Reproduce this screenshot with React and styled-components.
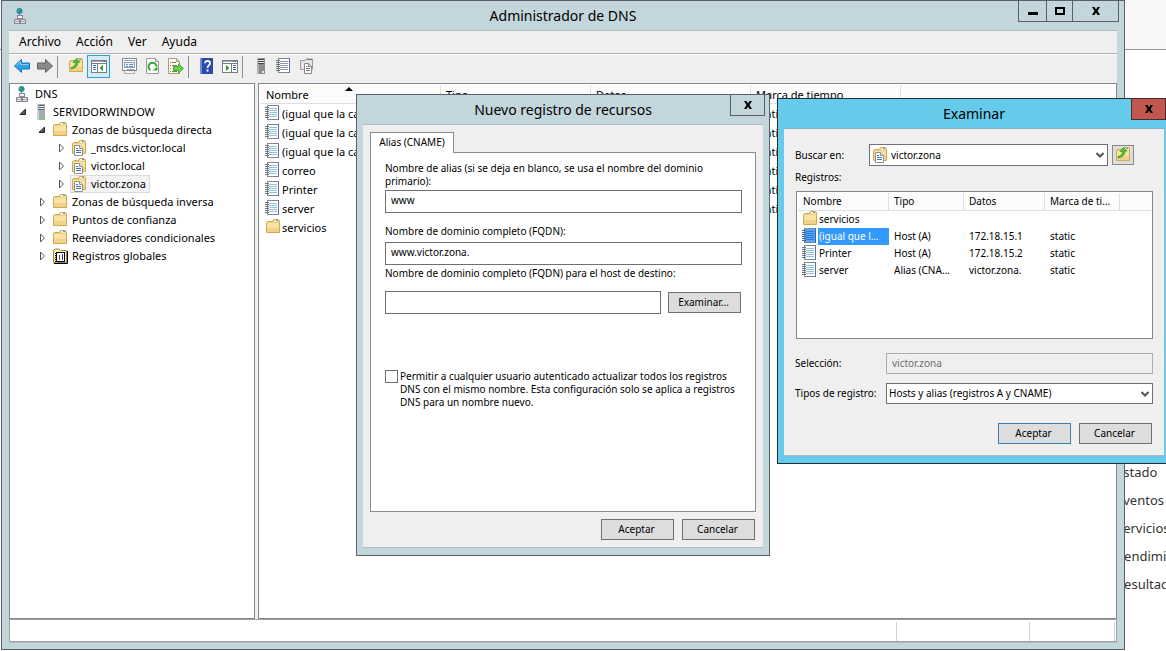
import React from "react";
import styled, { createGlobalStyle, css } from "styled-components";

const GlobalStyle = createGlobalStyle`
  * { box-sizing: border-box; }
  body {
    margin: 0;
    background: #fff;
    color: #000;
    font: 11px/18px "Noto Sans", "Open Sans", sans-serif;
  }
  button, input, select { font: inherit; color: inherit; border-radius: 0; margin: 0; }
  svg { display: block; flex: none; }
`;

/* ---------- icons ---------- */

const FolderShape = () => (
  <>
    <path d="M1.500 3.500V13.500H14.500V1.500L13.500 0.500H8.500L7.500 2.500H2.500Z" fill="#edcf82" stroke="#d3a94f" />
    <path d="M8.500 2.500 9.500 1H13L14 2.500Z" fill="#fff" />
    <rect x="11" y="1" width="2" height="1" fill="#3f97dc" />
    <rect x="2" y="4" width="12" height="9" fill="#f8e2a6" />
    <rect x="2" y="9" width="12" height="4" fill="#f0d288" />
  </>
);

const FolderIcon = () => (
  <svg width="16" height="16" viewBox="0 0 16 16" aria-hidden="true">
    <FolderShape />
  </svg>
);

const ZoneIcon = () => (
  <svg width="16" height="16" viewBox="0 0 16 16" aria-hidden="true">
    <FolderShape />
    <path d="M3.500 5.500H8.500L11.500 8.500V15.500H3.500Z" fill="#fff" stroke="#8b9099" />
    <path d="M8.500 5.500V8.500H11.500" fill="#e4e8ee" stroke="#8b9099" />
    <path d="M5 8.500H7M5 10.500H10M5 12.500H10" stroke="#4b74b8" />
  </svg>
);

const FolderUpIcon = () => (
  <svg width="16" height="16" viewBox="0 0 16 16" aria-hidden="true">
    <FolderShape />
    <path d="M3 9.500C6 9 7.500 7 7.500 4.500L5 4.500L8.500 0.500L12 4L10 4.200C10 7.500 7.500 10.500 3 11Z" fill="#4cc22c" stroke="#2e8f18" strokeWidth="0.600" />
  </svg>
);

const NotebookIcon = ({ selected, gray }) => (
  <svg width="16" height="16" viewBox="0 0 16 16" aria-hidden="true">
    <rect x="2.500" y="0.500" width="11" height="14" fill={selected ? "#5aa6f5" : "#fff"} stroke="#7f8791" />
    <path d="M13.500 0.500V15" stroke={selected ? "#2d5fc0" : "#5a6dae"} />
    <path d="M4 3.500H12M4 5.500H12M4 7.500H12M4 9.500H12M4 11.500H12" stroke={selected ? "#2a7be0" : gray ? "#8c98a8" : "#8fbfd9"} />
    <path d="M0 2.500H4M0 4.500H4M0 6.500H4M0 8.500H4M0 10.500H4M0 12.500H4" stroke={selected ? "#3563a8" : "#6f757c"} />
  </svg>
);

const ServerIcon = ({ dark }) => (
  <svg width="16" height="16" viewBox="0 0 16 16" aria-hidden="true">
    <rect x="4" y="0" width="8" height="16" fill={dark ? "#8c8c8c" : "#a3adb4"} />
    <rect x="4" y="0" width="2" height="16" fill={dark ? "#b0b0b0" : "#cbd3d8"} />
    <path d="M5 1.500H11M5 3.500H11M5 5.500H11" stroke={dark ? "#444" : "#5c666e"} />
    <path d="M5 2.500H11M5 4.500H11" stroke="#e6eaec" />
    <rect x="9" y="13" width="2" height="2" fill={dark ? "#e8e8e8" : "#5be02c"} />
  </svg>
);

const DnsIcon = () => (
  <svg width="16" height="16" viewBox="0 0 16 16" aria-hidden="true">
    <circle cx="6.500" cy="3" r="3" fill="#2b7fc4" />
    <path d="M4 2.500 6 0.500 7.500 1.500 6.500 3.500 5 4ZM7.500 4 9.500 3 8.500 5.500Z" fill="#35b540" />
    <path d="M6.500 6V7" stroke="#777" />
    <rect x="4.500" y="7.500" width="5" height="3" fill="#f2f3f7" stroke="#898994" />
    <path d="M7.500 10V12" stroke="#898994" />
    <rect x="1.500" y="11.500" width="5" height="4" fill="#e4e5ec" stroke="#898994" />
    <rect x="7.500" y="11.500" width="5" height="4" fill="#e4e5ec" stroke="#898994" />
    <path d="M2 13.500H6M8 13.500H12" stroke="#a9a9b3" />
  </svg>
);

const LogsIcon = () => (
  <svg width="16" height="16" viewBox="0 0 16 16" aria-hidden="true">
    <path d="M1.500 14.500V2.500L3 1H7L8.500 2.500H14.500V14.500Z" fill="#fff79a" stroke="#8d8a5c" />
    <path d="M2 15.500H15.500V3" fill="none" stroke="#000" />
    <rect x="4.500" y="4.500" width="8" height="9" fill="#fff" stroke="#000" />
    <path d="M4 5V14" stroke="#000" strokeWidth="2" strokeDasharray="1 1" />
    <path d="M10.500 6V12" stroke="#2532c8" />
    <path d="M7.500 7V9" stroke="#2532c8" />
    <path d="M7.500 9V12" stroke="#d81e1e" />
  </svg>
);

const ArrowIcon = ({ forward }) => (
  <svg width="16" height="16" viewBox="0 0 16 16" aria-hidden="true">
    {forward ? (
      <path d="M15.500 8 8.500 1.500V5H0.500V11H8.500V14.500Z" fill="#8a8a8a" stroke="#5e5e5e" />
    ) : (
      <>
        <path d="M0.500 8 7.500 1.500V5H15.500V11H7.500V14.500Z" fill="#2ba0e6" stroke="#1c76b8" />
        <path d="M2.500 7.500 6.500 3.700V6.500H14.500" fill="none" stroke="#8fd4f8" />
      </>
    )}
  </svg>
);

const PaneIcon = ({ right }) => (
  <svg width="16" height="16" viewBox="0 0 16 16" aria-hidden="true">
    <rect x="0.500" y="2.500" width="15" height="12" fill="#fff" stroke="#767d86" />
    <path d="M1 3.500H15" stroke="#aab0b8" />
    <path d="M11 3.500H15" stroke="#4b5562" strokeDasharray="1 1" />
    <path d="M1 5.500H15" stroke="#767d86" />
    {right ? (
      <>
        <path d="M9.500 6V14" stroke="#767d86" />
        <path d="M11 7.500H14M11 9.500H14M11 11.500H14" stroke="#3b6fb5" />
        <path d="M4 7 7.500 10 4 13Z" fill="#2f9d2b" />
      </>
    ) : (
      <>
        <path d="M6.500 6V14" stroke="#767d86" />
        <path d="M2 7.500H5M2 9.500H5M2 11.500H5" stroke="#3b6fb5" />
        <path d="M12 7 8.500 10 12 13Z" fill="#2f9d2b" />
      </>
    )}
  </svg>
);

const PropertiesIcon = () => (
  <svg width="16" height="16" viewBox="0 0 16 16" aria-hidden="true">
    <rect x="0.500" y="0.500" width="14" height="12" fill="#fff" stroke="#858c95" />
    <path d="M2 2.500H13" stroke="#9aa1aa" />
    <rect x="2.500" y="4.500" width="10" height="5" fill="#eef4fa" stroke="#8da0b5" />
    <path d="M4 6.500H6M4 8.500H6M7 6.500H11M7 8.500H11" stroke="#5e8fc4" />
    <path d="M5 11.500H12" stroke="#9aa1aa" />
    <path d="M2.500 13V15.500H12.500V13" fill="#f5f5f5" stroke="#a8aeb5" />
  </svg>
);

const RefreshIcon = () => (
  <svg width="14" height="16" viewBox="0 0 14 16" aria-hidden="true">
    <path d="M0.500 0.500H9.500L12.500 3.500V15.500H0.500Z" fill="#fff" stroke="#9b9b9b" />
    <path d="M9.500 0.500V3.500H12.500" fill="#ddd" stroke="#9b9b9b" />
    <path d="M4.500 12.200A4 4 0 1 1 10.500 8.500" fill="none" stroke="#35a832" strokeWidth="2" />
    <path d="M6.500 12.500H11.500V8.500Z" fill="#35a832" />
  </svg>
);

const ExportIcon = () => (
  <svg width="16" height="16" viewBox="0 0 16 16" aria-hidden="true">
    <path d="M0.500 0.500H8.500L11.500 3.500V15.500H0.500Z" fill="#fffbe8" stroke="#a39c86" />
    <path d="M8.500 0.500V3.500H11.500" fill="#e6dcc0" stroke="#a39c86" />
    <path d="M2 4.500H3M4 4.500H8M2 7.500H3M4 7.500H9M2 10.500H3M2 13.500H3M4 13.500H9" stroke="#7d7a70" />
    <path d="M5.500 8.500H10.500V6L15.500 10.500 10.500 15V12.500H5.500Z" fill="#6dd04a" stroke="#45a82a" />
  </svg>
);

const HelpIcon = () => (
  <svg width="14" height="16" viewBox="0 0 14 16" aria-hidden="true">
    <rect x="0" y="0" width="13" height="16" fill="#2c4ba8" />
    <rect x="0" y="0" width="2" height="16" fill="#6f8bd8" />
    <path d="M5 5.200C5 2 10 2 10 5.200C10 7.500 7.500 7.400 7.500 10" fill="none" stroke="#fff" strokeWidth="1.700" />
    <rect x="6.500" y="11.500" width="2" height="2" fill="#fff" />
  </svg>
);

const CopiesIcon = () => (
  <svg width="16" height="16" viewBox="0 0 16 16" aria-hidden="true">
    <path d="M1.500 2.500H6L7 1H13.500V11.500H1.500Z" fill="#e6e6e6" stroke="#9a9a9a" />
    <path d="M8 1.500H13" stroke="#777" />
    <path d="M5.500 5.500H9.500L12.500 8.500V15.500H5.500Z" fill="#fff" stroke="#888" />
    <path d="M9.500 5.500V8.500H12.500" fill="none" stroke="#888" />
    <path d="M7 8.500H8.500M7 10.500H11M7 12.500H11" stroke="#777" />
  </svg>
);

const CloseGlyph = () => (
  <svg width="10" height="8" viewBox="0 0 10 8" aria-hidden="true">
    <path d="M1 0H3.500L5 2.500 6.500 0H9L6.500 4 9 8H6.500L5 5.500 3.500 8H1L3.500 4Z" fill="#000" />
  </svg>
);

const MinimizeGlyph = () => (
  <svg width="10" height="8" viewBox="0 0 10 8" aria-hidden="true">
    <rect y="5" width="10" height="3" fill="#000" />
  </svg>
);

const MaximizeGlyph = () => (
  <svg width="10" height="8" viewBox="0 0 10 8" aria-hidden="true">
    <rect x="1" y="1" width="8" height="6" fill="none" stroke="#000" strokeWidth="2" />
  </svg>
);

const Chevron = () => (
  <svg width="8" height="6" viewBox="0 0 8 6" aria-hidden="true">
    <path d="M0.500 1 4 4.500 7.500 1" fill="none" stroke="#555" strokeWidth="2" />
  </svg>
);

const ExpandedMark = () => (
  <svg width="8" height="8" viewBox="0 0 8 8" aria-hidden="true">
    <path d="M6.500 1V6.500H1Z" fill="#595959" stroke="#262626" />
  </svg>
);

const CollapsedMark = () => (
  <svg width="8" height="10" viewBox="0 0 8 10" aria-hidden="true">
    <path d="M2.500 1 6.500 5 2.500 9Z" fill="#fff" stroke="#555" />
  </svg>
);

/* ---------- desktop and page behind the windows ---------- */

const Desktop = styled.div`
  position: relative;
  display: flex;
  justify-content: flex-end;
  min-height: 100vh;
  overflow: hidden;
  background: linear-gradient(#f7f7f7 0 49px, #999 49px 50px, #fff 50px);
`;

const ServerLinks = styled.nav`
  display: flex;
  flex-direction: column;
  width: 50px;
  padding-top: 458px;
  overflow: hidden;
`;

const ServerLink = styled.a`
  color: #333;
  font-size: 13px;
  line-height: 28px;
  text-decoration: none;
  white-space: nowrap;
`;

/* ---------- window frame ---------- */

const Window = styled.section`
  position: absolute;
  display: flex;
  flex-direction: column;
  border: 1px solid ${(p) => (p.$active ? "#1f2e36" : "#5a6069")};
  background: ${(p) => (p.$active ? "#66caea" : "#c3d6dc")};
  padding: 0 ${(p) => (p.$main ? 7 : 6)}px ${(p) => (p.$main ? 6 : 7)}px;
`;

const MainWindow = styled(Window)`
  inset: 0 41px 1px 1px;
`;

const RecordWindow = styled(Window)`
  left: 356px;
  top: 94px;
  width: 414px;
`;

const BrowseWindow = styled(Window)`
  left: 777px;
  top: 98px;
  width: 394px;
`;

const TitleBar = styled.header`
  display: flex;
  align-items: center;
  position: relative;
  height: 30px;
  border-bottom: 1px solid ${(p) => (p.$active ? "#84aec0" : "#aebbc1")};
`;

const Title = styled.h1`
  flex: 1;
  margin: 0;
  font-size: 14px;
  font-weight: 400;
  line-height: 20px;
  text-align: center;
`;

const TitleIcon = styled.span`
  position: absolute;
  left: 4px;
  top: 7px;
`;

const CaptionButtons = styled.div`
  position: absolute;
  top: -1px;
  right: -2px;
  display: flex;
`;

const CaptionButton = styled.button`
  display: flex;
  align-items: center;
  justify-content: center;
  width: ${(p) => p.$width}px;
  height: 22px;
  padding: 0;
  border: 1px solid ${(p) => (p.$danger ? "#4b2a2c" : "#5a6069")};
  background: ${(p) => (p.$danger ? "#c2574f" : "transparent")};
  & + & { margin-left: -1px; }
`;

const Client = styled.div`
  flex: 1;
  display: flex;
  flex-direction: column;
  min-height: 0;
  background: #efefef;
  border-bottom: 1px solid #aebbc1;
`;

/* ---------- main window ---------- */

const MenuBar = styled.nav`
  display: flex;
  height: 23px;
  border-bottom: 1px solid #b0b0b4;
`;

const MenuItem = styled.button`
  padding: 0 5px 0 10px;
  border: 0;
  background: transparent;
  font-size: 12px;
  line-height: 22px;
`;

const Toolbar = styled.div`
  display: flex;
  align-items: center;
  height: 29px;
  padding: 0 1px 5px;
  border-top: 1px solid #fff;
`;

const ToolButton = styled.button`
  display: flex;
  align-items: center;
  justify-content: center;
  width: 23px;
  height: 23px;
  padding: 0 0 1px 1px;
  border: 1px solid ${(p) => (p.$on ? "#26a0da" : "transparent")};
  background: ${(p) => (p.$on ? "#d5ebf7" : "transparent")};
`;

const Separator = styled.span`
  width: 1px;
  height: 22px;
  margin: 0 6px 0 1px;
  background: ${(p) => (p.$hidden ? "transparent" : "#8f8f8f")};
`;

const Panes = styled.div`
  flex: 1;
  display: flex;
  gap: 3px;
  min-height: 0;
`;

const Pane = styled.div`
  border: 1px solid #828790;
  background: #fff;
  overflow: hidden;
`;

const TreePane = styled(Pane)`
  width: 246px;
  padding-top: 1px;
`;

const ListPane = styled(Pane)`
  flex: 1;
  padding: 1px 0 0 2px;
`;

const Tree = styled.ul`
  margin: 0;
  padding: 0;
  list-style: none;
`;

const TreeRow = styled.li`
  display: flex;
  align-items: center;
  height: 18px;
  padding-left: ${(p) => 4 + Math.max(0, p.$level - 1) * 19}px;
`;

const Toggle = styled.span`
  display: flex;
  justify-content: center;
  width: 18px;
`;

const TreeLabel = styled.span`
  display: flex;
  align-items: center;
  gap: 4px;
  height: 18px;
  padding-right: 3px;
  border: 1px solid ${(p) => (p.$selected ? "#dadada" : "transparent")};
  background: ${(p) => (p.$selected ? "#f3f3f3" : "transparent")};
  white-space: nowrap;
`;

const StatusBar = styled.footer`
  display: flex;
  height: 23px;
  padding-right: 1px;
  border: 1px solid #a0a0a0;
  background: #fff;
`;

const StatusCell = styled.span`
  flex: ${(p) => (p.$width ? "none" : 1)};
  width: ${(p) => p.$width || 0}px;
  margin-top: 2px;
  border-right: 1px solid #d3d3d3;
`;

/* ---------- record tables ---------- */

const RecordTable = styled.table`
  width: 100%;
  table-layout: fixed;
  border-collapse: separate;
  border-spacing: 0;

  th, td {
    padding: 0 8px 0 5px;
    overflow: hidden;
    font-weight: 400;
    text-align: left;
    text-overflow: ellipsis;
    white-space: nowrap;
  }
  th {
    height: ${(p) => (p.$compact ? 18 : 19)}px;
    line-height: 17px;
    background: #fcfcfc;
    border-right: 1px solid #dfdfdf;
    border-bottom: 1px solid #dfdfdf;
  }
  th:last-child { border-right: 0; }
  td {
    height: ${(p) => (p.$compact ? 17 : 19)}px;
    line-height: ${(p) => (p.$compact ? 17 : 19)}px;
  }
  td:first-child { padding: 0 0 0 4px; }
`;

const Column = styled.col`
  width: ${(p) => (p.$width ? p.$width + "px" : "auto")};
`;

const SortHeader = styled.th`
  position: relative;
  svg { position: absolute; top: 2px; left: 84px; }
`;

const NameCell = styled.div`
  display: flex;
  align-items: center;
  svg { margin-bottom: 1px; }
`;

const NameText = styled.span`
  flex: 1;
  padding: 0 5px 0 1px;
  overflow: hidden;
  text-overflow: ellipsis;
  ${(p) =>
    p.$selected &&
    css`
      background: #3399ff;
      color: #fff;
    `}
`;

/* ---------- dialogs ---------- */

const DialogBody = styled(Client)`
  padding: 7px;
  font-size: 10px;
  line-height: 13px;
`;

const TabStrip = styled.div`
  display: flex;
`;

const Tab = styled.button`
  position: relative;
  width: 84px;
  height: 21px;
  margin-bottom: -1px;
  padding: 0 0 1px;
  border: 1px solid #898c95;
  border-bottom: 0;
  background: #fff;
`;

const TabPanel = styled.div`
  display: flex;
  flex-direction: column;
  height: 360px;
  padding: 9px 13px 0 14px;
  border: 1px solid #898c95;
  background: #fff;
`;

const FieldLabel = styled.label`
  margin-top: ${(p) => p.$space || 0}px;
`;

const TextBox = styled.input`
  flex: ${(p) => (p.$grow ? 1 : "none")};
  min-width: 0;
  height: ${(p) => p.$height || 23}px;
  margin-top: ${(p) => p.$space || 0}px;
  padding: 0 5px 3px;
  border: 1px solid #707070;
  background: #fff;
  &:disabled {
    padding-bottom: 1px;
    border-color: #abadb3;
    background: #efefef;
    color: #6d6d6d;
  }
`;

const BrowseRow = styled.div`
  display: flex;
  align-items: center;
  gap: 7px;
  margin: 11px 1px 0 0;
`;

const PushButton = styled.button`
  width: 73px;
  height: 21px;
  padding: 0 2px 0 0;
  border: 1px solid ${(p) => (p.$default ? "#3c7fb1" : "#707070")};
  background: #dddddd;
`;

const CheckRow = styled.div`
  display: flex;
  align-items: flex-start;
  gap: 2px;
  margin: 56px -4px 0 0;
`;

const CheckBox = styled.input`
  appearance: none;
  flex: none;
  width: 13px;
  height: 13px;
  border: 1px solid #707070;
  background: #fff;
  &:checked { background: #707070; }
`;

const ButtonRow = styled.div`
  display: flex;
  justify-content: flex-end;
  gap: 8px;
  margin: ${(p) => p.$space}px 1px 0 0;
`;

const BrowseBody = styled(Client)`
  padding: 15px 11px 11px;
  font-size: 10px;
  line-height: 13px;
`;

const FormRow = styled.div`
  display: flex;
  align-items: center;
  margin-top: ${(p) => p.$space || 0}px;
  ${(p) => p.$inset && css`padding-right: 19px;`}
`;

const RowLabel = styled.label`
  width: ${(p) => p.$width}px;
  white-space: nowrap;
`;

const SelectWrap = styled.span`
  position: relative;
  flex: 1;
  display: flex;
  svg { position: absolute; pointer-events: none; }
  svg:first-child { left: 3px; top: 3px; }
  svg:last-child { right: 4px; top: 8px; }
`;

const SelectBox = styled.select`
  appearance: none;
  width: 100%;
  height: ${(p) => p.$height || 21}px;
  padding: 0 20px 0 ${(p) => (p.$icon ? 21 : 2)}px;
  border: 1px solid #707070;
  background: #fff;
`;

const UpButton = styled.button`
  display: flex;
  align-items: center;
  justify-content: center;
  width: 22px;
  height: 20px;
  margin-left: 4px;
  padding: 0;
  border: 1px solid #8a8a8a;
  background: #dddddd;
`;

const ListBox = styled.div`
  height: 148px;
  margin: 7px 0 0 1px;
  padding: 1px;
  border: 1px solid #828790;
  background: #fff;
`;

/* ---------- content ---------- */

const links = ["Estado", "Eventos", "Servicios", "Rendimiento", "Resultados BPA"];

const treeNodes = [
  { level: 0, label: "DNS", Icon: DnsIcon },
  { level: 1, label: "SERVIDORWINDOW", Icon: ServerIcon, Mark: ExpandedMark },
  { level: 2, label: "Zonas de búsqueda directa", Icon: FolderIcon, Mark: ExpandedMark },
  { level: 3, label: "_msdcs.victor.local", Icon: ZoneIcon, Mark: CollapsedMark },
  { level: 3, label: "victor.local", Icon: ZoneIcon, Mark: CollapsedMark },
  { level: 3, label: "victor.zona", Icon: ZoneIcon, Mark: CollapsedMark, selected: true },
  { level: 2, label: "Zonas de búsqueda inversa", Icon: FolderIcon, Mark: CollapsedMark },
  { level: 2, label: "Puntos de confianza", Icon: FolderIcon, Mark: CollapsedMark },
  { level: 2, label: "Reenviadores condicionales", Icon: FolderIcon, Mark: CollapsedMark },
  { level: 2, label: "Registros globales", Icon: LogsIcon, Mark: CollapsedMark },
];

const zoneRecords = [
  { name: "(igual que la carpeta principal)", stamp: "static" },
  { name: "(igual que la carpeta principal)", stamp: "static" },
  { name: "(igual que la carpeta principal)", stamp: "static" },
  { name: "correo", stamp: "static" },
  { name: "Printer", stamp: "static" },
  { name: "server", stamp: "static" },
  { name: "servicios", folder: true },
];

const browseRecords = [
  { name: "servicios", folder: true },
  { name: "(igual que la carpeta principal)", type: "Host (A)", data: "172.18.15.1", stamp: "static", selected: true },
  { name: "Printer", type: "Host (A)", data: "172.18.15.2", stamp: "static" },
  { name: "server", type: "Alias (CNAME)", data: "victor.zona.", stamp: "static" },
];

function Records({ rows, widths, compact, sorted }) {
  return (
    <RecordTable $compact={compact}>
      <colgroup>
        {widths.map((w) => <Column key={w.id} $width={w.width} />)}
        <Column />
      </colgroup>
      <thead>
        <tr>
          <SortHeader>
            Nombre
            {sorted && (
              <svg width="8" height="4" viewBox="0 0 8 4" aria-hidden="true">
                <path d="M0 4 4 0 8 4Z" fill="#000" />
              </svg>
            )}
          </SortHeader>
          <th>Tipo</th>
          <th>Datos</th>
          <th>Marca de tiempo</th>
          <th />
        </tr>
      </thead>
      <tbody>
        {rows.map((r, i) => (
          <tr key={i}>
            <td>
              <NameCell>
                {r.folder ? <FolderIcon /> : <NotebookIcon selected={r.selected} />}
                <NameText $selected={r.selected}>{r.name}</NameText>
              </NameCell>
            </td>
            <td>{r.type}</td>
            <td>{r.data}</td>
            <td>{r.stamp}</td>
            <td />
          </tr>
        ))}
      </tbody>
    </RecordTable>
  );
}

const mainColumns = [
  { id: "name", width: 180 },
  { id: "type", width: 150 },
  { id: "data", width: 160 },
  { id: "stamp", width: 150 },
];

const browseColumns = [
  { id: "name", width: 91 },
  { id: "type", width: 75 },
  { id: "data", width: 81 },
  { id: "stamp", width: 75 },
];

function DnsManager() {
  return (
    <MainWindow $main>
      <TitleBar>
        <TitleIcon><DnsIcon /></TitleIcon>
        <Title>Administrador de DNS</Title>
        <CaptionButtons>
          <CaptionButton $width={29} aria-label="Minimizar"><MinimizeGlyph /></CaptionButton>
          <CaptionButton $width={27} aria-label="Maximizar"><MaximizeGlyph /></CaptionButton>
          <CaptionButton $width={47} aria-label="Cerrar"><CloseGlyph /></CaptionButton>
        </CaptionButtons>
      </TitleBar>
      <Client>
        <MenuBar>
          <MenuItem>Archivo</MenuItem>
          <MenuItem>Acción</MenuItem>
          <MenuItem>Ver</MenuItem>
          <MenuItem>Ayuda</MenuItem>
        </MenuBar>
        <Toolbar>
          <ToolButton aria-label="Atrás"><ArrowIcon /></ToolButton>
          <ToolButton aria-label="Adelante"><ArrowIcon forward /></ToolButton>
          <Separator />
          <ToolButton aria-label="Subir un nivel"><FolderUpIcon /></ToolButton>
          <ToolButton $on aria-label="Mostrar árbol"><PaneIcon /></ToolButton>
          <Separator $hidden />
          <ToolButton aria-label="Propiedades"><PropertiesIcon /></ToolButton>
          <ToolButton aria-label="Actualizar"><RefreshIcon /></ToolButton>
          <ToolButton aria-label="Exportar lista"><ExportIcon /></ToolButton>
          <Separator />
          <ToolButton aria-label="Ayuda"><HelpIcon /></ToolButton>
          <ToolButton aria-label="Panel de acciones"><PaneIcon right /></ToolButton>
          <Separator />
          <ToolButton aria-label="Servidor"><ServerIcon dark /></ToolButton>
          <ToolButton aria-label="Registro"><NotebookIcon gray /></ToolButton>
          <ToolButton aria-label="Zonas"><CopiesIcon /></ToolButton>
        </Toolbar>
        <Panes>
          <TreePane>
            <Tree>
              {treeNodes.map(({ level, label, Icon, Mark, selected }) => (
                <TreeRow key={label} $level={level}>
                  {Mark && <Toggle><Mark /></Toggle>}
                  <TreeLabel $selected={selected}><Icon />{label}</TreeLabel>
                </TreeRow>
              ))}
            </Tree>
          </TreePane>
          <ListPane>
            <Records rows={zoneRecords} widths={mainColumns} sorted />
          </ListPane>
        </Panes>
        <StatusBar>
          <StatusCell />
          <StatusCell $width={133} />
          <StatusCell $width={85} />
        </StatusBar>
      </Client>
    </MainWindow>
  );
}

function NewRecordDialog() {
  return (
    <RecordWindow>
      <TitleBar>
        <Title>Nuevo registro de recursos</Title>
        <CaptionButtons>
          <CaptionButton $width={35} aria-label="Cerrar"><CloseGlyph /></CaptionButton>
        </CaptionButtons>
      </TitleBar>
      <DialogBody>
        <TabStrip><Tab>Alias (CNAME)</Tab></TabStrip>
        <TabPanel>
          <FieldLabel htmlFor="alias">
            Nombre de alias (si se deja en blanco, se usa el nombre del dominio primario):
          </FieldLabel>
          <TextBox id="alias" $space={2} defaultValue="www" />
          <FieldLabel htmlFor="fqdn" $space={12}>Nombre de dominio completo (FQDN):</FieldLabel>
          <TextBox id="fqdn" $space={4} defaultValue="www.victor.zona." />
          <FieldLabel htmlFor="target" $space={2}>
            Nombre de dominio completo (FQDN) para el host de destino:
          </FieldLabel>
          <BrowseRow>
            <TextBox id="target" $grow />
            <PushButton>Examinar...</PushButton>
          </BrowseRow>
          <CheckRow>
            <CheckBox type="checkbox" id="allow" />
            <FieldLabel htmlFor="allow">
              Permitir a cualquier usuario autenticado actualizar todos los registros DNS con el
              mismo nombre. Esta configuración solo se aplica a registros DNS para un nombre nuevo.
            </FieldLabel>
          </CheckRow>
        </TabPanel>
        <ButtonRow $space={7}>
          <PushButton>Aceptar</PushButton>
          <PushButton>Cancelar</PushButton>
        </ButtonRow>
      </DialogBody>
    </RecordWindow>
  );
}

function BrowseDialog() {
  return (
    <BrowseWindow $active>
      <TitleBar $active>
        <Title>Examinar</Title>
        <CaptionButtons>
          <CaptionButton $danger $width={35} aria-label="Cerrar"><CloseGlyph /></CaptionButton>
        </CaptionButtons>
      </TitleBar>
      <BrowseBody>
        <FormRow $inset>
          <RowLabel htmlFor="look" $width={74}>Buscar en:</RowLabel>
          <SelectWrap>
            <ZoneIcon />
            <SelectBox id="look" $icon $height={22}><option>victor.zona</option></SelectBox>
            <Chevron />
          </SelectWrap>
          <UpButton aria-label="Subir un nivel"><FolderUpIcon /></UpButton>
        </FormRow>
        <FormRow $space={5}>Registros:</FormRow>
        <ListBox>
          <Records rows={browseRecords} widths={browseColumns} compact />
        </ListBox>
        <FormRow $space={14}>
          <RowLabel htmlFor="selection" $width={91}>Selección:</RowLabel>
          <TextBox id="selection" $grow $height={21} disabled defaultValue="victor.zona" />
        </FormRow>
        <FormRow $space={9}>
          <RowLabel htmlFor="types" $width={91}>Tipos de registro:</RowLabel>
          <SelectWrap>
            <SelectBox id="types"><option>Hosts y alias (registros A y CNAME)</option></SelectBox>
            <Chevron />
          </SelectWrap>
        </FormRow>
        <ButtonRow $space={19}>
          <PushButton $default>Aceptar</PushButton>
          <PushButton>Cancelar</PushButton>
        </ButtonRow>
      </BrowseBody>
    </BrowseWindow>
  );
}

export default function App() {
  return (
    <>
      <GlobalStyle />
      <Desktop>
        <ServerLinks>
          {links.map((l) => <ServerLink key={l} href="#">{l}</ServerLink>)}
        </ServerLinks>
        <DnsManager />
        <NewRecordDialog />
        <BrowseDialog />
      </Desktop>
    </>
  );
}
